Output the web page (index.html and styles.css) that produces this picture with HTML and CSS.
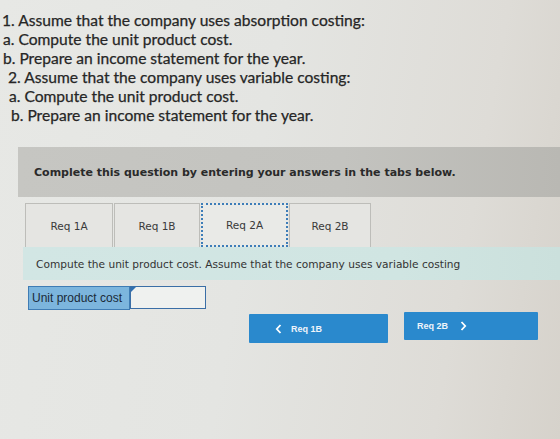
FILE: index.html
```html
<!DOCTYPE html>
<html lang="en">
<head>
<meta charset="utf-8">
<title>Variable costing</title>
<link rel="stylesheet" href="styles.css">
</head>
<body>
<div class="screen">
  <div class="prompt">
    <p class="line l1">1. Assume that the company uses absorption costing:</p>
    <p class="line l2">a. Compute the unit product cost.</p>
    <p class="line l3">b. Prepare an income statement for the year.</p>
    <p class="line l4">2. Assume that the company uses variable costing:</p>
    <p class="line l5">a. Compute the unit product cost.</p>
    <p class="line l6">b. Prepare an income statement for the year.</p>
  </div>

  <div class="question">
    <div class="banner">Complete this question by entering your answers in the tabs below.</div>

    <div class="tabs">
      <div class="tab t1a">Req 1A</div>
      <div class="tab t1b">Req 1B</div>
      <div class="tab t2a active">Req 2A</div>
      <div class="tab t2b">Req 2B</div>
    </div>

    <div class="panel">Compute the unit product cost. Assume that the company uses variable costing</div>

    <div class="answer">
      <label class="answer-label" for="upc">Unit product cost</label>
      <div class="answer-field">
        <span class="corner"></span>
        <input id="upc" class="answer-input" type="text">
      </div>
    </div>

    <div class="nav">
      <button class="nav-btn prev" type="button">
        <svg class="chev" width="7" height="10" viewBox="0 0 7 10"><path d="M5.5 1 L1.8 5 L5.5 9" fill="none" stroke="#fff" stroke-width="1.8"/></svg>
        <span>Req 1B</span>
      </button>
      <button class="nav-btn next" type="button">
        <span>Req 2B</span>
        <svg class="chev" width="7" height="10" viewBox="0 0 7 10"><path d="M1.5 1 L5.2 5 L1.5 9" fill="none" stroke="#fff" stroke-width="1.8"/></svg>
      </button>
    </div>
  </div>
</div>
</body>
</html>
```

FILE: styles.css
```css
html, body {
  margin: 0;
  padding: 0;
}

body {
  width: 560px;
  height: 439px;
  overflow: hidden;
  background: linear-gradient(100deg, #e7e8e5 0%, #e4e5e2 45%, #dedcd7 80%, #d6d2cb 100%);
}

.screen {
  padding-top: 11px;
}

/* question text */
.prompt {
  font-family: Lato, "Open Sans", sans-serif;
  font-size: 15.6px;
  line-height: 19px;
  color: #262626;
  -webkit-text-stroke: 0.25px #262626;
}

.line {
  margin: 0;
  white-space: nowrap;
}

.l1 { padding-left: 2px; }
.l2 { padding-left: 3px; }
.l3 { padding-left: 3px; }
.l4 { padding-left: 8px; }
.l5 { padding-left: 9px; }
.l6 { padding-left: 11px; }

/* answer area */
.question {
  margin-top: 22px;
  margin-left: 18px;
  font-family: "DejaVu Sans", Verdana, sans-serif;
  color: #333;
}

.banner {
  height: 50px;
  display: flex;
  align-items: center;
  padding-left: 16px;
  background: linear-gradient(90deg, #c6c6c2 0%, #c3c3bf 60%, #b9b8b3 100%);
  font-weight: bold;
  font-size: 11px;
  color: #2a2a2a;
}

.tabs {
  display: flex;
  margin-top: 6px;
  margin-left: 7px;
  height: 44px;
}

.tab {
  display: flex;
  align-items: center;
  justify-content: center;
  box-sizing: border-box;
  height: 44px;
  border: 1px solid #bdbdb9;
  border-bottom: none;
  background: #e5e5e2;
  font-size: 10.5px;
  color: #3a3a3a;
}

.tab + .tab { margin-left: 1px; }

.t1a { width: 88px; }
.t1b { width: 86px; }
.t2a { width: 87px; }
.t2b { width: 82px; }

.tab.active {
  border: 2px dotted #3d7db8;
  background: #e9eae7;
}

.panel {
  margin-left: 5px;
  height: 33px;
  display: flex;
  align-items: center;
  padding-left: 13px;
  background: linear-gradient(90deg, #d2e6e4 0%, #d0e5e2 70%, #cbe0dc 100%);
  font-size: 10.6px;
  color: #333;
}

.answer {
  display: flex;
  margin-top: 6px;
  margin-left: 10px;
  height: 24px;
}

.answer-label {
  box-sizing: border-box;
  width: 102px;
  height: 24px;
  display: flex;
  align-items: center;
  padding-left: 3px;
  background: #7cb5dd;
  border: 1px solid #3f7cb4;
  font-family: "Liberation Sans", Arial, sans-serif;
  font-size: 12px;
  color: #1a2a38;
}

.answer-field {
  position: relative;
  width: 76px;
  height: 23px;
}

.answer-input {
  box-sizing: border-box;
  width: 76px;
  height: 23px;
  margin: 0;
  border: 1.5px solid #3a6ea6;
  background: #eff1ef;
  outline: none;
}

.corner {
  position: absolute;
  left: 1px;
  top: 1px;
  width: 0;
  height: 0;
  border-top: 5px solid #2f6fb0;
  border-right: 5px solid transparent;
}

.nav {
  display: flex;
  align-items: flex-start;
  margin-top: 2px;
  margin-left: 231px;
}

.nav-btn {
  display: flex;
  align-items: center;
  justify-content: flex-start;
  box-sizing: border-box;
  height: 29px;
  border: none;
  border-radius: 1px;
  padding: 0;
  background: #2a89cd;
  color: #eef4fa;
  font-family: "Liberation Sans", Arial, sans-serif;
  font-weight: bold;
  font-size: 9px;
}

.prev {
  width: 139px;
  margin-top: 2px;
  padding-left: 26px;
  gap: 9px;
}

.next {
  width: 134px;
  height: 28px;
  margin-left: 16px;
  padding-left: 13px;
  gap: 12px;
}

.chev { display: block; }
```
